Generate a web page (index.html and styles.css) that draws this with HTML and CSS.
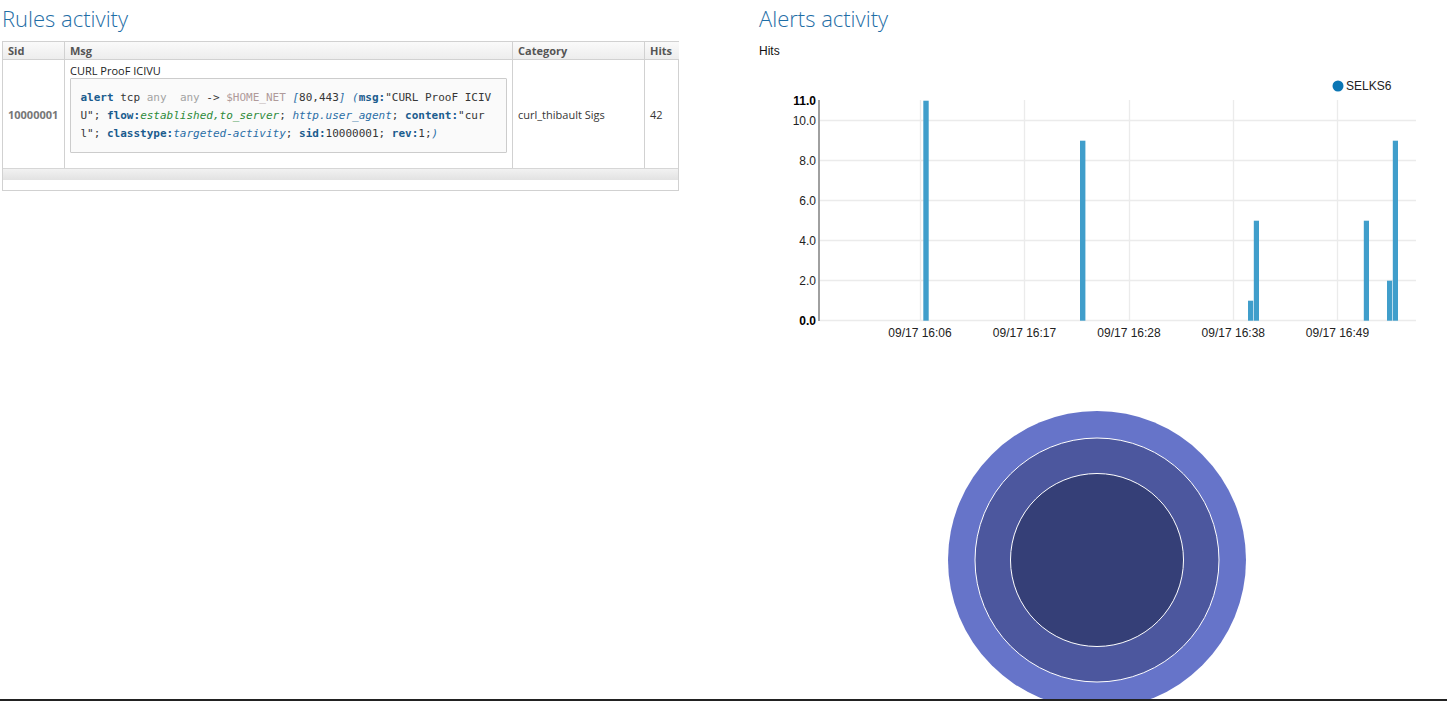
FILE: index.html
```html
<!DOCTYPE html>
<html>
<head>
<meta charset="utf-8">
<link rel="stylesheet" href="styles.css">
</head>
<body>
<div class="page">
  <section class="col">
    <h2 class="title">Rules activity</h2>
    <div class="table-wrap">
      <table class="rules">
        <thead>
          <tr>
            <th class="c-sid">Sid</th>
            <th class="c-msg">Msg</th>
            <th class="c-cat">Category</th>
            <th class="c-hits">Hits</th>
          </tr>
        </thead>
        <tbody>
          <tr>
            <td class="sid">10000001</td>
            <td class="msg">
              <div class="msg-name">CURL ProoF ICIVU</div>
<pre class="rule"><b class="k">alert</b> tcp <span class="a">any</span>  <span class="a">any</span> -&gt; <span class="v">$HOME_NET</span> <i class="p">[</i>80,443<i class="p">]</i> <i class="p">(</i><b class="k">msg:</b>"CURL ProoF ICIV
U"; <b class="k">flow:</b><i class="g">established,to_server</i>; <i class="p">http.user_agent</i>; <b class="k">content:</b>"cur
l"; <b class="k">classtype:</b><i class="p">targeted-activity</i>; <b class="k">sid:</b>10000001; <b class="k">rev:</b>1;<i class="p">)</i></pre>
            </td>
            <td class="mid">curl_thibault Sigs</td>
            <td class="mid">42</td>
          </tr>
        </tbody>
      </table>
      <div class="scroll-strip"></div>
      <div class="scroll-space"></div>
    </div>
  </section>

  <section class="col">
    <h2 class="title">Alerts activity</h2>
    <div class="hits-label">Hits</div>
    <svg class="chart" width="688" height="290" viewBox="0 0 688 290">
      <g class="grid">
        <line x1="61" y1="220.5" x2="657" y2="220.5"/>
        <line x1="61" y1="180.5" x2="657" y2="180.5"/>
        <line x1="61" y1="140.5" x2="657" y2="140.5"/>
        <line x1="61" y1="100.5" x2="657" y2="100.5"/>
        <line x1="61" y1="60.5" x2="657" y2="60.5"/>
        <line x1="61" y1="260.5" x2="657" y2="260.5"/>
        <line x1="161.5" y1="40" x2="161.5" y2="261"/>
        <line x1="265.5" y1="40" x2="265.5" y2="261"/>
        <line x1="370.5" y1="40" x2="370.5" y2="261"/>
        <line x1="474.5" y1="40" x2="474.5" y2="261"/>
        <line x1="578.5" y1="40" x2="578.5" y2="261"/>
      </g>
      <g class="bars">
        <rect x="164.3" y="40.7" width="5.4" height="220"/>
        <rect x="321" y="80.7" width="5.4" height="180"/>
        <rect x="489" y="240.7" width="5.2" height="20"/>
        <rect x="494.8" y="160.7" width="5.2" height="100"/>
        <rect x="604.8" y="160.7" width="5.2" height="100"/>
        <rect x="628" y="220.7" width="5.2" height="40"/>
        <rect x="633.8" y="80.7" width="5.2" height="180"/>
      </g>
      <line class="axis" x1="60" y1="40" x2="60" y2="261"/>
      <g class="ylabels">
        <text x="57" y="44.5" class="bold">11.0</text>
        <text x="57" y="64.5">10.0</text>
        <text x="57" y="104.5">8.0</text>
        <text x="57" y="144.5">6.0</text>
        <text x="57" y="184.5">4.0</text>
        <text x="57" y="224.5">2.0</text>
        <text x="57" y="264.5" class="bold">0.0</text>
      </g>
      <g class="xlabels">
        <text x="161" y="277">09/17 16:06</text>
        <text x="265.5" y="277">09/17 16:17</text>
        <text x="370" y="277">09/17 16:28</text>
        <text x="474.3" y="277">09/17 16:38</text>
        <text x="578.5" y="277">09/17 16:49</text>
      </g>
      <g class="legend">
        <circle cx="579" cy="26" r="5.5"/>
        <text x="587" y="30.3">SELKS6</text>
      </g>
    </svg>
    <svg class="sunburst" width="688" height="300" viewBox="0 0 688 300">
      <circle cx="338" cy="150" r="149" class="ring1"/>
      <circle cx="338" cy="150" r="122" class="ring2"/>
      <circle cx="338" cy="150" r="86.5" class="ring3"/>
    </svg>
  </section>
</div>
<div class="bottom-line"></div>
</body>
</html>
```

FILE: styles.css
```css
html, body {
  margin: 0;
  padding: 0;
  background: #ffffff;
  overflow: hidden;
}

body {
  font-family: "Open Sans", "Liberation Sans", sans-serif;
  color: #363636;
}

.page {
  display: grid;
  grid-template-columns: 677px 1fr;
  column-gap: 80px;
  padding-left: 2px;
}

.col {
  display: flex;
  flex-direction: column;
  align-items: flex-start;
}

.title {
  margin: 0;
  padding-top: 5px;
  font-family: "Open Sans", sans-serif;
  font-size: 22px;
  line-height: 27px;
  font-weight: 300;
  color: #1f6ea6;
}

/* ---------- table ---------- */
.table-wrap {
  margin-top: 9px;
  width: 677px;
  border: 1px solid #d1d1d1;
  box-sizing: border-box;
}

.rules {
  width: 676px;
  border-collapse: separate;
  border-spacing: 0;
  table-layout: fixed;
  font-size: 11px;
}

.rules th {
  height: 17px;
  padding: 0 5px;
  line-height: 17px;
  text-align: left;
  font-weight: 700;
  color: #555555;
  background: linear-gradient(#fafafa, #ededed);
  border-right: 1px solid #d1d1d1;
  border-bottom: 1px solid #d1d1d1;
  box-sizing: border-box;
}

.rules td {
  padding: 0 5px;
  border-right: 1px solid #d1d1d1;
  height: 108px;
  box-sizing: border-box;
  color: #363636;
}

.rules th:last-child,
.rules td:last-child {
  border-right: none;
}

.c-sid { width: 62px; }
.c-msg { width: 448px; }
.c-cat { width: 132px; }
.c-hits { width: 34px; }

.rules td.sid {
  vertical-align: middle;
  font-weight: 700;
  color: #777777;
}

.rules td.mid {
  vertical-align: middle;
}

.rules td.msg {
  vertical-align: top;
  padding-top: 4px;
}

.msg-name {
  line-height: 14px;
  color: #222222;
}

.rule {
  margin: 0 0 10px 0;
  padding: 9.5px;
  background: #fafafa;
  border: 1px solid #cccccc;
  border-radius: 1px;
  font-family: "DejaVu Sans Mono", monospace;
  font-size: 11px;
  line-height: 18px;
  color: #363636;
  white-space: pre;
  overflow: hidden;
}

.rule .k { font-weight: 700; color: #1a5c8e; font-style: normal; }
.rule .a { color: #a3a3a3; }
.rule .v { color: #b09a9a; }
.rule .p { color: #2a6ea6; font-style: italic; }
.rule .g { color: #2e8a3a; font-style: italic; }

.scroll-strip {
  height: 11px;
  border-top: 1px solid #d6d6d6;
  background: linear-gradient(#f2f2f2, #e2e2e2);
}

.scroll-space {
  height: 10px;
}

/* ---------- chart ---------- */
.hits-label {
  margin-top: 12px;
  font-family: "Liberation Sans", Arial, sans-serif;
  font-size: 12px;
  line-height: 14px;
  color: #111111;
}

.chart {
  display: block;
  margin-top: 2px;
  font-family: "Liberation Sans", Arial, sans-serif;
  font-size: 12px;
}

.grid line {
  stroke: #ebebeb;
  stroke-width: 1.3;
}

.axis {
  stroke: #a0a0a0;
  stroke-width: 2;
}

.bars rect {
  fill: #409ecb;
}

.ylabels text {
  text-anchor: end;
  fill: #222222;
}

.ylabels text.bold {
  font-weight: 700;
  fill: #000000;
}

.xlabels text {
  text-anchor: middle;
  fill: #222222;
}

.legend circle {
  fill: #0b76b4;
}

.legend text {
  fill: #222222;
}

.sunburst {
  display: block;
  margin-top: 60px;
}

.ring1 { fill: #6674c9; }
.ring2 { fill: #4c579e; stroke: #ffffff; stroke-width: 1; }
.ring3 { fill: #353f77; stroke: #ffffff; stroke-width: 1; }

.bottom-line {
  position: fixed;
  left: 0;
  right: 0;
  bottom: 0;
  height: 2px;
  background: #222222;
}
```
